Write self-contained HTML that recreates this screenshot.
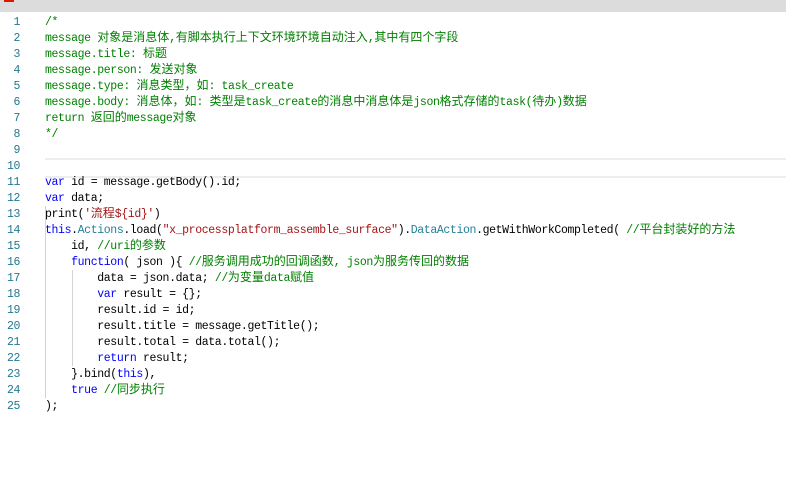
<!DOCTYPE html>
<html><head><meta charset="utf-8"><style>
html,body{margin:0;padding:0;background:#fff;width:786px;height:483px;overflow:hidden;}
.top{position:absolute;left:0;top:0;width:786px;height:12px;background:#dcdcdc;}
.red{position:absolute;left:4px;top:0;width:10px;height:2px;background:#e51400;}
.l{position:absolute;left:0;height:16px;line-height:16px;white-space:pre;font-family:"Liberation Mono","Noto Sans CJK SC",monospace;font-size:11.5px;letter-spacing:-0.37px;color:#000;}
.n{position:absolute;left:0;top:1px;width:20px;text-align:right;color:#237893;}
.c{position:absolute;left:45px;top:1px;line-height:16px;}
.z{font-family:"Noto Sans CJK SC",sans-serif;font-size:12px;letter-spacing:0;line-height:0;}
.g{color:#008000}.k{color:#0000ff}.s{color:#a31515}.t{color:#267f99}
.hl{position:absolute;left:45px;top:158px;width:741px;height:16px;border-top:2px solid #eee;border-bottom:2px solid #eee;}
.guide{position:absolute;width:1px;background:#d3d3d3;}
</style></head><body>
<div class="top"><div class="red"></div></div>
<div class="hl"></div>
<div class="guide" style="left:45px;top:206px;height:192px"></div>
<div class="guide" style="left:72px;top:270px;height:96px"></div>
<div class="l" style="top:14px"><span class="n">1</span><span class="c g">/*</span></div>
<div class="l" style="top:30px"><span class="n">2</span><span class="c g">message <span class="z">对象是消息体</span>,<span class="z">有脚本执行上下文环境环境自动注入</span>,<span class="z">其中有四个字段</span></span></div>
<div class="l" style="top:46px"><span class="n">3</span><span class="c g">message.title: <span class="z">标题</span></span></div>
<div class="l" style="top:62px"><span class="n">4</span><span class="c g">message.person: <span class="z">发送对象</span></span></div>
<div class="l" style="top:78px"><span class="n">5</span><span class="c g">message.type: <span class="z">消息类型，如</span>: task_create</span></div>
<div class="l" style="top:94px"><span class="n">6</span><span class="c g">message.body: <span class="z">消息体，如</span>: <span class="z">类型是</span>task_create<span class="z">的消息中消息体是</span>json<span class="z">格式存储的</span>task(<span class="z">待办</span>)<span class="z">数据</span></span></div>
<div class="l" style="top:110px"><span class="n">7</span><span class="c g">return <span class="z">返回的</span>message<span class="z">对象</span></span></div>
<div class="l" style="top:126px"><span class="n">8</span><span class="c g">*/</span></div>
<div class="l" style="top:142px"><span class="n">9</span></div>
<div class="l" style="top:158px"><span class="n">10</span></div>
<div class="l" style="top:174px"><span class="n">11</span><span class="c"><span class="k">var</span> id = message.getBody().id;</span></div>
<div class="l" style="top:190px"><span class="n">12</span><span class="c"><span class="k">var</span> data;</span></div>
<div class="l" style="top:206px"><span class="n">13</span><span class="c">print(<span class="s">'<span class="z">流程</span>${id}'</span>)</span></div>
<div class="l" style="top:222px"><span class="n">14</span><span class="c"><span class="k">this</span>.<span class="t">Actions</span>.load(<span class="s">"x_processplatform_assemble_surface"</span>).<span class="t">DataAction</span>.getWithWorkCompleted( <span class="g">//<span class="z">平台封装好的方法</span></span></span></div>
<div class="l" style="top:238px"><span class="n">15</span><span class="c">    id, <span class="g">//uri<span class="z">的参数</span></span></span></div>
<div class="l" style="top:254px"><span class="n">16</span><span class="c">    <span class="k">function</span>( json ){ <span class="g">//<span class="z">服务调用成功的回调函数</span>, json<span class="z">为服务传回的数据</span></span></span></div>
<div class="l" style="top:270px"><span class="n">17</span><span class="c">        data = json.data; <span class="g">//<span class="z">为变量</span>data<span class="z">赋值</span></span></span></div>
<div class="l" style="top:286px"><span class="n">18</span><span class="c">        <span class="k">var</span> result = {};</span></div>
<div class="l" style="top:302px"><span class="n">19</span><span class="c">        result.id = id;</span></div>
<div class="l" style="top:318px"><span class="n">20</span><span class="c">        result.title = message.getTitle();</span></div>
<div class="l" style="top:334px"><span class="n">21</span><span class="c">        result.total = data.total();</span></div>
<div class="l" style="top:350px"><span class="n">22</span><span class="c">        <span class="k">return</span> result;</span></div>
<div class="l" style="top:366px"><span class="n">23</span><span class="c">    }.bind(<span class="k">this</span>),</span></div>
<div class="l" style="top:382px"><span class="n">24</span><span class="c">    <span class="k">true</span> <span class="g">//<span class="z">同步执行</span></span></span></div>
<div class="l" style="top:398px"><span class="n">25</span><span class="c">);</span></div>
</body></html>
